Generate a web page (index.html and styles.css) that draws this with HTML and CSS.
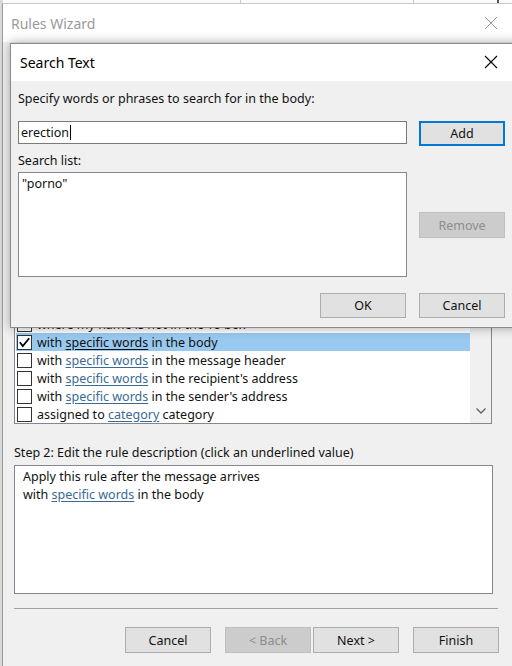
FILE: index.html
```html
<!DOCTYPE html>
<html>
<head>
<meta charset="utf-8">
<link rel="stylesheet" href="styles.css">
</head>
<body>
<div class="desk">
  <div class="backdrop-top"><span class="bt-line l1"></span><span class="bt-line l2"></span><span class="bt-mark"></span></div>
  <div class="backdrop-left"></div>

  <div class="wizard">
    <div class="titlebar wiz-title">
      <span class="wiz-title-text">Rules Wizard</span>
      <svg class="close close-wiz" width="14" height="14" viewBox="0 0 14 14"><path d="M1 1L13 13M13 1L1 13" stroke="#9a9a9a" stroke-width="1" fill="none"/></svg>
    </div>
    <div class="wiz-body">
      <div class="spacer"></div>
      <div class="cond-list">
        <div class="rows">
          <div class="row"><span class="cb"></span><span>where my name is not in the To box</span></div>
          <div class="row selected"><span class="cb"><svg width="13" height="13" viewBox="0 0 13 13"><path d="M1.8 6.3L4.8 10L11.2 2.2" stroke="#000" stroke-width="1.8" fill="none"/></svg></span><span>with <span class="link">specific words</span> in the body</span></div>
          <div class="row"><span class="cb"></span><span>with <span class="link">specific words</span> in the message header</span></div>
          <div class="row"><span class="cb"></span><span>with <span class="link">specific words</span> in the recipient's address</span></div>
          <div class="row"><span class="cb"></span><span>with <span class="link">specific words</span> in the sender's address</span></div>
          <div class="row"><span class="cb"></span><span>assigned to <span class="link">category</span> category</span></div>
        </div>
        <div class="scroll">
          <svg width="12" height="8" viewBox="0 0 12 8"><path d="M1.5 1.5L6 6L10.5 1.5" stroke="#606060" stroke-width="1.3" fill="none"/></svg>
        </div>
      </div>
      <div class="label step2">Step 2: Edit the rule description (click an underlined value)</div>
      <div class="desc-box">
        <div>Apply this rule after the message arrives</div>
        <div>with <span class="link">specific words</span> in the body</div>
      </div>
      <div class="separator"></div>
      <div class="wiz-buttons">
        <div class="btn">Cancel</div>
        <div class="btn disabled back">&lt; Back</div>
        <div class="btn next">Next &gt;</div>
        <div class="btn finish">Finish</div>
      </div>
    </div>
  </div>

  <div class="dialog">
    <div class="titlebar dlg-title">
      <span class="dlg-title-text">Search Text</span>
      <svg class="close close-dlg" width="14" height="14" viewBox="0 0 14 14"><path d="M1 1L13 13M13 1L1 13" stroke="#000" stroke-width="1.1" fill="none"/></svg>
    </div>
    <div class="dlg-body">
      <div class="label">Specify words or phrases to search for in the body:</div>
      <div class="dlg-main">
        <div class="dlg-left">
          <div class="input">erection<span class="caret"></span></div>
          <div class="label list-label">Search list:</div>
          <div class="search-list">"porno"</div>
        </div>
        <div class="dlg-right">
          <div class="btn add">Add</div>
          <div class="btn disabled remove">Remove</div>
        </div>
      </div>
      <div class="dlg-footer">
        <div class="btn">OK</div>
        <div class="btn">Cancel</div>
      </div>
    </div>
  </div>
</div>
</body>
</html>
```

FILE: styles.css
```css
* { box-sizing: border-box; }
html, body { margin: 0; padding: 0; }
body {
  width: 512px;
  height: 666px;
  overflow: hidden;
  background: #ffffff;
  font-family: "Noto Sans", "Open Sans", sans-serif;
  font-size: 12.5px;
  color: #111;
}
.desk {
  position: relative;
  width: 512px;
  height: 666px;
  overflow: hidden;
}
.backdrop-top {
  position: absolute;
  left: 0; top: 0;
  width: 512px; height: 4px;
  background: #fbfbfb;
}
.bt-line { position: absolute; top: 0; width: 1px; height: 4px; background: #c8c8c8; }
.bt-line.l1 { left: 240px; }
.bt-line.l2 { left: 413px; }
.bt-mark { position: absolute; left: 497px; top: 0; width: 2px; height: 3px; background: #555; }
.backdrop-left {
  position: absolute;
  left: 0; top: 0;
  width: 3px; height: 666px;
  background: #d9d9d9;
}

.wizard {
  position: absolute;
  left: 2px; top: 3px;
  width: 520px; height: 670px;
  background: #f0f0f0;
  border-left: 1px solid #9a9a9a;
  border-top: 1px solid #c8c8c8;
}
.titlebar {
  position: relative;
  background: #fff;
  display: flex;
  align-items: center;
}
.wiz-title { height: 38px; padding-left: 8px; }
.wiz-title-text { font-size: 14px; color: #9a9a9a; }
.close { position: absolute; }
.close-wiz { left: 481px; top: 12px; }

.wiz-body { padding: 8px 0 0 11px; }
.spacer { height: 16px; }
.label { line-height: 16px; height: 16px; white-space: nowrap; }
.cond-list {
  width: 478px;
  height: 358px;
  background: #fff;
  border: 1px solid #828790;
  display: flex;
}
.rows {
  width: 455px;
  padding-left: 1px;
  display: flex;
  flex-direction: column;
  justify-content: flex-end;
  overflow: hidden;
}
.row {
  height: 18px;
  flex: none;
  display: flex;
  align-items: center;
  white-space: nowrap;
}
.row.selected { background: #99c9ef; }
.row.selected .link { color: #111; }
.cb {
  width: 15px; height: 15px;
  margin-left: 1px;
  margin-right: 5px;
  border: 1px solid #333;
  background: #fff;
  display: flex;
  align-items: center;
  justify-content: center;
}
.cb svg { display: block; }
.link {
  color: #3b6a92;
  text-decoration: underline;
  text-underline-offset: 2px;
}
.scroll {
  flex: 1;
  background: #f0f0f0;
  display: flex;
  align-items: flex-end;
  justify-content: center;
  padding-bottom: 8px;
}
.step2 { margin-top: 21px; }
.desc-box {
  width: 479px;
  height: 129px;
  margin-top: 4px;
  background: #fff;
  border: 1px solid #828790;
  padding: 2px 0 0 8px;
  line-height: 18px;
}
.separator {
  width: 484px;
  height: 1px;
  margin-top: 14px;
  background: #a0a0a0;
}
.wiz-buttons {
  width: 485px;
  margin-top: 18px;
  display: flex;
  justify-content: flex-end;
}
.btn {
  width: 86px;
  height: 26px;
  background: #e1e1e1;
  border: 1px solid #adadad;
  display: flex;
  align-items: center;
  justify-content: center;
  color: #111;
}
.btn.disabled {
  background: #cccccc;
  border-color: #bfbfbf;
  color: #8c8c8c;
}
.wiz-buttons .back { margin-left: 14px; }
.wiz-buttons .next { margin-left: 2px; }
.wiz-buttons .finish { margin-left: 14px; }

.dialog {
  position: absolute;
  left: 10px; top: 43px;
  width: 510px; height: 285px;
  background: #f0f0f0;
  border: 1px solid #8a8a8a;
  box-shadow: 0 0 10px rgba(0, 0, 0, 0.35);
}
.dlg-title { height: 37px; padding-left: 9px; }
.dlg-title-text { font-size: 14px; color: #000; }
.close-dlg { left: 473px; top: 11px; }
.dlg-body { padding: 10px 0 0 7px; }
.dlg-main {
  margin-top: 14px;
  display: grid;
  grid-template-columns: 389px 86px;
  column-gap: 12px;
}
.dlg-left { display: flex; flex-direction: column; }
.input {
  height: 23px;
  background: #fff;
  border: 1px solid #7a7a7a;
  padding-left: 2px;
  display: flex;
  align-items: center;
}
.caret { width: 1px; height: 15px; background: #000; margin-left: 1px; }
.list-label { margin-top: 9px; }
.search-list {
  height: 105px;
  margin-top: 3px;
  background: #fff;
  border: 1px solid #828790;
  padding: 2px 0 0 3px;
  line-height: 18px;
}
.dlg-right { display: flex; flex-direction: column; }
.add { height: 25px; border: 2px solid #0078d7; }
.remove { margin-top: 66px; }
.dlg-footer {
  width: 487px;
  margin-top: 16px;
  display: flex;
  justify-content: flex-end;
  gap: 13px;
}
.dlg-footer .btn { height: 25px; }
```
